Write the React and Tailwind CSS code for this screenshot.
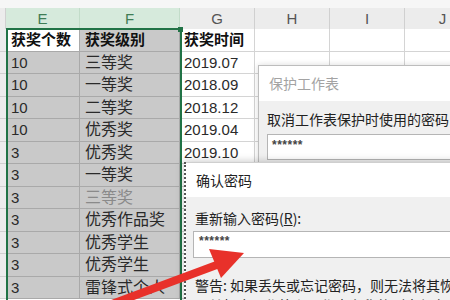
import React from "react";

const rows = [
  { e: "10", f: "三等奖", g: "2019.07" },
  { e: "10", f: "一等奖", g: "2018.09" },
  { e: "10", f: "二等奖", g: "2018.12" },
  { e: "10", f: "优秀奖", g: "2019.04" },
  { e: "3", f: "优秀奖", g: "2019.10" },
  { e: "3", f: "一等奖", g: "" },
  { e: "3", f: "三等奖", g: "", faded: true },
  { e: "3", f: "优秀作品奖", g: "" },
  { e: "3", f: "优秀学生", g: "" },
  { e: "3", f: "优秀学生", g: "" },
  { e: "3", f: "雷锋式个人", g: "" },
];

const cellFont = { fontFamily: '"Liberation Sans", "Noto Sans CJK SC", sans-serif' };
const uiFont = { fontFamily: '"Noto Sans CJK SC", "Liberation Sans", sans-serif' };

function Row({ children }) {
  return <div className="flex h-[22.5px]">{children}</div>;
}

export default function App() {
  return (
    <div className="relative w-[450px] h-[300px] overflow-hidden bg-white" style={cellFont}>
      {/* top strip */}
      <div className="h-[8px] bg-[#f6f6f6]" />

      {/* column headers */}
      <div className="flex h-[21px] text-[15px] leading-[21px]">
        <div className="w-[6px] bg-[#ececec] border-r border-[#d0d0d0]" />
        <div className="w-[74px] bg-[#d6eadc] text-[#3f7d55] text-center border-r border-[#c2dcc9]">E</div>
        <div className="w-[100px] bg-[#d6eadc] text-[#3f7d55] text-center border-r border-[#c2dcc9]">F</div>
        <div className="w-[75px] bg-[#ececec] text-[#555] text-center border-r border-[#d0d0d0]">G</div>
        <div className="w-[75px] bg-[#ececec] text-[#555] text-center border-r border-[#d0d0d0]">H</div>
        <div className="w-[75px] bg-[#ececec] text-[#555] text-center border-r border-[#d0d0d0]">I</div>
        <div className="flex-1 bg-[#ececec] text-[#555] text-center pl-[30px]">J</div>
      </div>

      {/* header row */}
      <Row>
        <div className="w-[6px] bg-[#ececec] border-b border-[#d0d0d0]" />
        <div className="w-[74px] bg-white border-b border-r border-[#a9a9a9] pl-[5px] text-[15px] font-bold leading-[22px] text-[#111]">获奖个数</div>
        <div className="w-[100px] bg-[#c9c9c9] border-b border-r border-[#a9a9a9] pl-[5px] text-[15px] font-bold leading-[22px] text-[#111]">获奖级别</div>
        <div className="w-[75px] border-b border-r border-[#d4d4d4] pl-[4px] text-[15px] font-bold leading-[22px] text-[#111]">获奖时间</div>
        <div className="w-[75px] border-b border-r border-[#d4d4d4]" />
        <div className="w-[75px] border-b border-r border-[#d4d4d4]" />
        <div className="flex-1 border-b border-[#d4d4d4]" />
      </Row>

      {rows.map((r, i) => (
        <Row key={i}>
          <div className="w-[6px] bg-[#ececec] border-b border-[#d0d0d0]" />
          <div className="w-[74px] bg-[#c9c9c9] border-b border-r border-[#a9a9a9] pl-[5px] text-[15px] leading-[22px] text-[#2a2a2a]">{r.e}</div>
          <div className={`w-[100px] bg-[#c9c9c9] border-b border-r border-[#a9a9a9] pl-[5px] text-[16px] leading-[22px] ${r.faded ? "text-[#8a8a8a]" : "text-[#2a2a2a]"}`}>{r.f}</div>
          <div className="w-[75px] border-b border-r border-[#d4d4d4] pl-[4px] text-[15px] leading-[22px] text-[#2a2a2a]">{r.g}</div>
          <div className="w-[75px] border-b border-r border-[#d4d4d4]" />
          <div className="w-[75px] border-b border-r border-[#d4d4d4]" />
          <div className="flex-1 border-b border-[#d4d4d4]" />
        </Row>
      ))}

      {/* selection border */}
      <div className="absolute left-[6px] top-[28px] w-[176px] h-[280px] border-2 border-[#217346] pointer-events-none" />
      <div className="absolute left-[178px] top-[27px] w-[5px] h-[5px] bg-[#217346]" />

      {/* dialog: 保护工作表 */}
      <div className="absolute left-[258px] top-[65px] w-[220px] h-[260px] border border-[#bdbdbd] shadow-[0_0_6px_rgba(0,0,0,0.15)]" style={uiFont}>
        <div className="h-[35px] bg-white pl-[10px] text-[14px] leading-[35px] text-[#a3a3a3]">保护工作表</div>
        <div className="h-full bg-[#f0f0f0] pt-[8px] pl-[8px]">
          <div className="text-[14px] leading-[20px] text-[#222] whitespace-nowrap">取消工作表保护时使用的密码</div>
          <div className="mt-[5px] h-[26px] bg-white border border-[#b5b5b5] pl-[4px] text-[12px] font-bold leading-[20px] text-[#444] tracking-[0.5px]" style={cellFont}>******</div>
        </div>
      </div>

      {/* dialog: 确认密码 */}
      <div className="absolute left-[184px] top-[162px] w-[290px] h-[160px] border-l-2 border-dotted border-[#555] shadow-[0_0_8px_rgba(0,0,0,0.25)]" style={uiFont}>
        <div className="h-[35px] bg-white pl-[10px] text-[14px] leading-[35px] text-[#222] border-t border-[#cfcfcf]">确认密码</div>
        <div className="h-full bg-[#f0f0f0] pt-[11px] pl-[9px]">
          <div className="text-[14px] leading-[20px] text-[#222] whitespace-nowrap">
            重新输入密码(<span className="underline">R</span>):
          </div>
          <div className="mt-[3px] -ml-[2px] h-[27px] bg-white border border-[#b5b5b5] pl-[5px] text-[12px] font-bold leading-[18px] text-[#444] tracking-[0.5px]" style={cellFont}>******</div>
          <div className="mt-[17px] text-[14px] leading-[20px] text-[#222] whitespace-nowrap">警告: 如果丢失或忘记密码，则无法将其恢复。</div>
          <div className="text-[14px] leading-[20px] text-[#222] whitespace-nowrap">及其相应工作簿和工作表名称的列表保存在</div>
        </div>
      </div>

      {/* red arrow */}
      <svg className="absolute left-0 top-0 pointer-events-none" width="450" height="300" viewBox="0 0 450 300">
        <line x1="85" y1="314" x2="222" y2="263" stroke="#e8312a" strokeWidth="8" />
        <polygon points="244,253 209,249 221,278" fill="#e8312a" />
      </svg>
    </div>
  );
}
